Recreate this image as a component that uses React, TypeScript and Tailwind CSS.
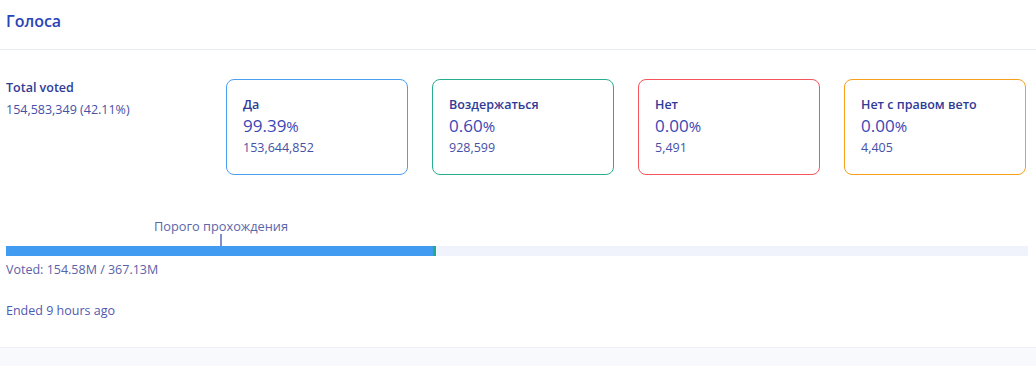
const cards = [
  { title: "Да", pct: "99.39", count: "153,644,852", border: "border-[#4a9ff0]" },
  { title: "Воздержаться", pct: "0.60", count: "928,599", border: "border-[#27ae8e]" },
  { title: "Нет", pct: "0.00", count: "5,491", border: "border-[#f6555e]" },
  { title: "Нет с правом вето", pct: "0.00", count: "4,405", border: "border-[#f6a01b]" },
];

export default function App() {
  return (
    <div className="w-[1036px] h-[366px] bg-white font-['Open_Sans',sans-serif] text-[#4650a6] flex flex-col">
      <div className="h-[50px] border-b border-[#e9eef5] px-1.5 flex items-center">
        <h1 className="text-[16px] font-semibold text-[#2a44b8] -mt-[8px]">Голоса</h1>
      </div>

      <div className="flex-1 flex flex-col pl-1.5 pr-2">
        <div className="flex mt-[29px]">
          <div className="w-[220px] pt-[1px]">
            <div className="text-[12.5px] font-semibold text-[#2f3b96] leading-[16px]">Total voted</div>
            <div className="text-[12.5px] mt-[6px] leading-[16px]">154,583,349 (42.11%)</div>
          </div>
          <div className="flex gap-[24px]">
            {cards.map((c) => (
              <div
                key={c.title}
                className={`w-[182px] h-[96px] rounded-[8px] border ${c.border} pl-[16px] pt-[16px]`}
              >
                <div className="text-[12.5px] font-semibold text-[#2f3b96] leading-[18px]">{c.title}</div>
                <div className="text-[17px] text-[#3a46b4] leading-[22px] mt-[1px]">
                  {c.pct}
                  <span className="text-[15px]">%</span>
                </div>
                <div className="text-[12.5px] leading-[16px] mt-[3px]">{c.count}</div>
              </div>
            ))}
          </div>
        </div>

        <div className="mt-[43px] relative">
          <div className="h-[28px] relative">
            <div className="absolute left-[215px] -translate-x-1/2 top-[0px] text-[12.8px] text-[#5d66a8] whitespace-nowrap leading-[16px]">
              Порого прохождения
            </div>
            <div className="absolute left-[214px] top-[16px] w-[2px] h-[12px] bg-[#7f8fd0]" />
          </div>
          <div className="h-[10px] bg-[#f0f3fb] flex">
            <div className="h-full bg-[#419bf0] w-[427px]" />
            <div className="h-full bg-[#23a98c] w-[3px]" />
          </div>
          <div className="text-[12.5px] leading-[16px] mt-[6px] text-[#5a62a8]">Voted: 154.58M / 367.13M</div>
        </div>

        <div className="text-[12.5px] leading-[16px] mt-[25px] text-[#5058b0]">Ended 9 hours ago</div>
      </div>

      <div className="h-[19px] border-t border-[#eef1f7] bg-[#f8f9fd]" />
    </div>
  );
}
